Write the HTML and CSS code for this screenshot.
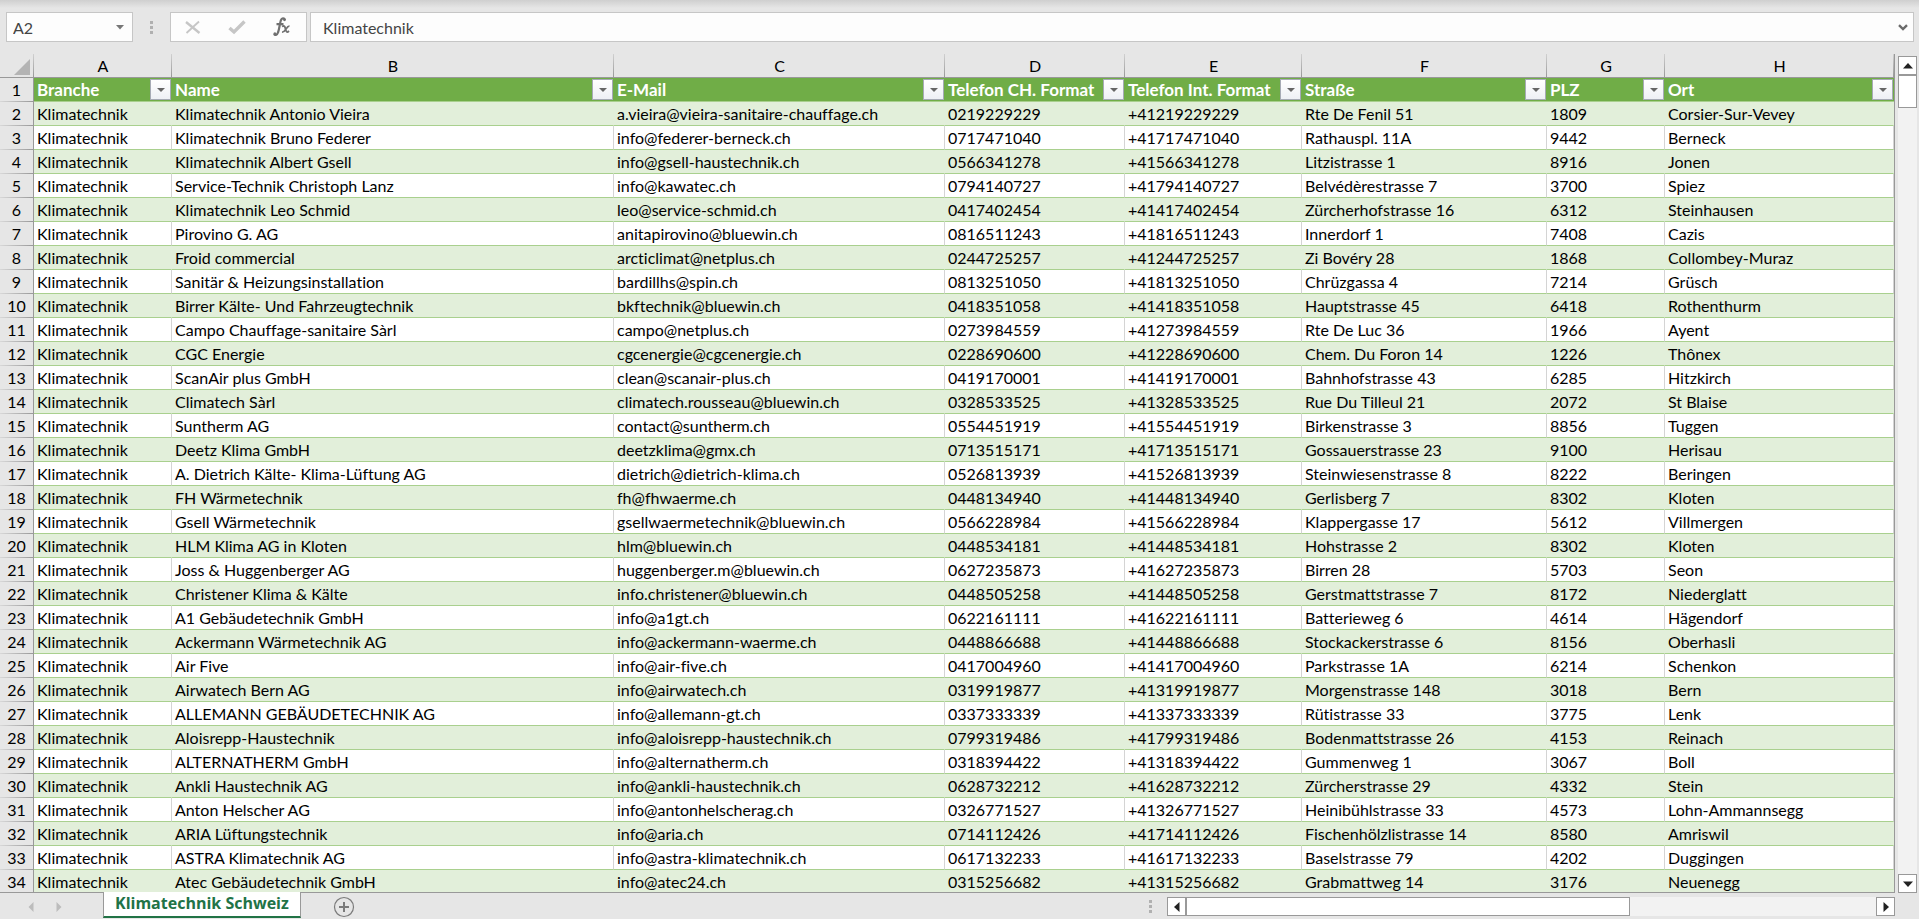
FILE: index.html
```html
<!DOCTYPE html>
<html lang="de">
<head>
<meta charset="utf-8">
<title>Klimatechnik Schweiz</title>
<link rel="stylesheet" href="styles.css">
</head>
<body>
<header class="formula-bar">
  <div class="name-box">
    <input class="name-input" type="text" value="A2" aria-label="Namenfeld">
    <button class="name-toggle" type="button" aria-label="Namen anzeigen"><svg width="8" height="5" viewBox="0 0 8 5"><path d="M0 0h8L4 4.5z" fill="#777"/></svg></button>
  </div>
  <span class="grip"><i></i><i></i><i></i></span>
  <div class="edit-actions">
    <button type="button" aria-label="Abbrechen"><svg width="16" height="16" viewBox="0 0 16 16"><path d="M1 3L14.500 14" fill="none" stroke="#c6c6c6" stroke-width="2.400"/><path d="M14 2.500L1.500 14" fill="none" stroke="#c6c6c6" stroke-width="1.800"/></svg></button>
    <button type="button" aria-label="Eingeben"><svg width="18" height="16" viewBox="0 0 18 16"><path d="M1.500 9L6 13L16.500 2.500" fill="none" stroke="#c6c6c6" stroke-width="3.400"/></svg></button>
    <button type="button" aria-label="Funktion einfügen"><svg width="18" height="20" viewBox="0 0 18 20"><path d="M12 3C11.300 .8 8.800 .8 7.800 3.500C6.800 6.500 6.300 12 5 15.500C4 18.500 1.800 18.500 1.200 17M3.500 7.200H10.500" fill="none" stroke="#707070" stroke-width="2.200"/><circle cx="11.500" cy="2.800" r="1.400" fill="#707070"/><circle cx="1.900" cy="16.800" r="1.500" fill="#707070"/><path d="M9 9.500C11.500 8 12 10 12.500 12C13 15 14 16 16 14M16.500 9.200C13.500 8.800 12.500 15.500 9 15.200" fill="none" stroke="#707070" stroke-width="1.800"/></svg></button>
  </div>
  <div class="formula-box">
    <input class="formula-input" type="text" value="Klimatechnik" aria-label="Bearbeitungsleiste">
    <button class="formula-toggle" type="button" aria-label="Erweitern"><svg width="10" height="7" viewBox="0 0 10 7"><path d="M1 1.200L5 5L9 1.200" fill="none" stroke="#6b6b6b" stroke-width="2.400"/></svg></button>
  </div>
</header>
<main class="workspace">
  <div class="grid">
    <table class="sheet">
      <colgroup><col class="w-num"><col class="w-a"><col class="w-b"><col class="w-c"><col class="w-d"><col class="w-e"><col class="w-f"><col class="w-g"><col class="w-h"></colgroup>
      <thead>
        <tr class="letters"><th class="corner"><svg width="16" height="16" viewBox="0 0 16 16"><path d="M16 0V16H0z" fill="#b4b4b4"/></svg></th><th>A</th><th>B</th><th>C</th><th>D</th><th>E</th><th>F</th><th>G</th><th>H</th></tr>
        <tr class="fields"><th class="num">1</th>
          <th><div class="field">Branche<button type="button" class="filter" aria-label="Branche filtern"></button></div></th>
          <th><div class="field">Name<button type="button" class="filter" aria-label="Name filtern"></button></div></th>
          <th><div class="field">E-Mail<button type="button" class="filter" aria-label="E-Mail filtern"></button></div></th>
          <th><div class="field">Telefon CH. Format<button type="button" class="filter" aria-label="Telefon CH. filtern"></button></div></th>
          <th><div class="field">Telefon Int. Format<button type="button" class="filter" aria-label="Telefon Int. filtern"></button></div></th>
          <th><div class="field">Straße<button type="button" class="filter" aria-label="Straße filtern"></button></div></th>
          <th><div class="field">PLZ<button type="button" class="filter" aria-label="PLZ filtern"></button></div></th>
          <th><div class="field">Ort<button type="button" class="filter" aria-label="Ort filtern"></button></div></th>
        </tr>
      </thead>
      <tbody>
        <tr><th class="num">2</th><td>Klimatechnik</td><td>Klimatechnik Antonio Vieira</td><td>a.vieira@vieira-sanitaire-chauffage.ch</td><td>0219229229</td><td>+41219229229</td><td>Rte De Fenil 51</td><td>1809</td><td>Corsier-Sur-Vevey</td></tr>
        <tr><th class="num">3</th><td>Klimatechnik</td><td>Klimatechnik Bruno Federer</td><td>info@federer-berneck.ch</td><td>0717471040</td><td>+41717471040</td><td>Rathauspl. 11A</td><td>9442</td><td>Berneck</td></tr>
        <tr><th class="num">4</th><td>Klimatechnik</td><td>Klimatechnik Albert Gsell</td><td>info@gsell-haustechnik.ch</td><td>0566341278</td><td>+41566341278</td><td>Litzistrasse 1</td><td>8916</td><td>Jonen</td></tr>
        <tr><th class="num">5</th><td>Klimatechnik</td><td>Service-Technik Christoph Lanz</td><td>info@kawatec.ch</td><td>0794140727</td><td>+41794140727</td><td>Belvédèrestrasse 7</td><td>3700</td><td>Spiez</td></tr>
        <tr><th class="num">6</th><td>Klimatechnik</td><td>Klimatechnik Leo Schmid</td><td>leo@service-schmid.ch</td><td>0417402454</td><td>+41417402454</td><td>Zürcherhofstrasse 16</td><td>6312</td><td>Steinhausen</td></tr>
        <tr><th class="num">7</th><td>Klimatechnik</td><td>Pirovino G. AG</td><td>anitapirovino@bluewin.ch</td><td>0816511243</td><td>+41816511243</td><td>Innerdorf 1</td><td>7408</td><td>Cazis</td></tr>
        <tr><th class="num">8</th><td>Klimatechnik</td><td>Froid commercial</td><td>arcticlimat@netplus.ch</td><td>0244725257</td><td>+41244725257</td><td>Zi Bovéry 28</td><td>1868</td><td>Collombey-Muraz</td></tr>
        <tr><th class="num">9</th><td>Klimatechnik</td><td>Sanitär &amp; Heizungsinstallation</td><td>bardillhs@spin.ch</td><td>0813251050</td><td>+41813251050</td><td>Chrüzgassa 4</td><td>7214</td><td>Grüsch</td></tr>
        <tr><th class="num">10</th><td>Klimatechnik</td><td>Birrer Kälte- Und Fahrzeugtechnik</td><td>bkftechnik@bluewin.ch</td><td>0418351058</td><td>+41418351058</td><td>Hauptstrasse 45</td><td>6418</td><td>Rothenthurm</td></tr>
        <tr><th class="num">11</th><td>Klimatechnik</td><td>Campo Chauffage-sanitaire Sàrl</td><td>campo@netplus.ch</td><td>0273984559</td><td>+41273984559</td><td>Rte De Luc 36</td><td>1966</td><td>Ayent</td></tr>
        <tr><th class="num">12</th><td>Klimatechnik</td><td>CGC Energie</td><td>cgcenergie@cgcenergie.ch</td><td>0228690600</td><td>+41228690600</td><td>Chem. Du Foron 14</td><td>1226</td><td>Thônex</td></tr>
        <tr><th class="num">13</th><td>Klimatechnik</td><td>ScanAir plus GmbH</td><td>clean@scanair-plus.ch</td><td>0419170001</td><td>+41419170001</td><td>Bahnhofstrasse 43</td><td>6285</td><td>Hitzkirch</td></tr>
        <tr><th class="num">14</th><td>Klimatechnik</td><td>Climatech Sàrl</td><td>climatech.rousseau@bluewin.ch</td><td>0328533525</td><td>+41328533525</td><td>Rue Du Tilleul 21</td><td>2072</td><td>St Blaise</td></tr>
        <tr><th class="num">15</th><td>Klimatechnik</td><td>Suntherm AG</td><td>contact@suntherm.ch</td><td>0554451919</td><td>+41554451919</td><td>Birkenstrasse 3</td><td>8856</td><td>Tuggen</td></tr>
        <tr><th class="num">16</th><td>Klimatechnik</td><td>Deetz Klima GmbH</td><td>deetzklima@gmx.ch</td><td>0713515171</td><td>+41713515171</td><td>Gossauerstrasse 23</td><td>9100</td><td>Herisau</td></tr>
        <tr><th class="num">17</th><td>Klimatechnik</td><td>A. Dietrich Kälte- Klima-Lüftung AG</td><td>dietrich@dietrich-klima.ch</td><td>0526813939</td><td>+41526813939</td><td>Steinwiesenstrasse 8</td><td>8222</td><td>Beringen</td></tr>
        <tr><th class="num">18</th><td>Klimatechnik</td><td>FH Wärmetechnik</td><td>fh@fhwaerme.ch</td><td>0448134940</td><td>+41448134940</td><td>Gerlisberg 7</td><td>8302</td><td>Kloten</td></tr>
        <tr><th class="num">19</th><td>Klimatechnik</td><td>Gsell Wärmetechnik</td><td>gsellwaermetechnik@bluewin.ch</td><td>0566228984</td><td>+41566228984</td><td>Klappergasse 17</td><td>5612</td><td>Villmergen</td></tr>
        <tr><th class="num">20</th><td>Klimatechnik</td><td>HLM Klima AG in Kloten</td><td>hlm@bluewin.ch</td><td>0448534181</td><td>+41448534181</td><td>Hohstrasse 2</td><td>8302</td><td>Kloten</td></tr>
        <tr><th class="num">21</th><td>Klimatechnik</td><td>Joss &amp; Huggenberger AG</td><td>huggenberger.m@bluewin.ch</td><td>0627235873</td><td>+41627235873</td><td>Birren 28</td><td>5703</td><td>Seon</td></tr>
        <tr><th class="num">22</th><td>Klimatechnik</td><td>Christener Klima &amp; Kälte</td><td>info.christener@bluewin.ch</td><td>0448505258</td><td>+41448505258</td><td>Gerstmattstrasse 7</td><td>8172</td><td>Niederglatt</td></tr>
        <tr><th class="num">23</th><td>Klimatechnik</td><td>A1 Gebäudetechnik GmbH</td><td>info@a1gt.ch</td><td>0622161111</td><td>+41622161111</td><td>Batterieweg 6</td><td>4614</td><td>Hägendorf</td></tr>
        <tr><th class="num">24</th><td>Klimatechnik</td><td>Ackermann Wärmetechnik AG</td><td>info@ackermann-waerme.ch</td><td>0448866688</td><td>+41448866688</td><td>Stockackerstrasse 6</td><td>8156</td><td>Oberhasli</td></tr>
        <tr><th class="num">25</th><td>Klimatechnik</td><td>Air Five</td><td>info@air-five.ch</td><td>0417004960</td><td>+41417004960</td><td>Parkstrasse 1A</td><td>6214</td><td>Schenkon</td></tr>
        <tr><th class="num">26</th><td>Klimatechnik</td><td>Airwatech Bern AG</td><td>info@airwatech.ch</td><td>0319919877</td><td>+41319919877</td><td>Morgenstrasse 148</td><td>3018</td><td>Bern</td></tr>
        <tr><th class="num">27</th><td>Klimatechnik</td><td>ALLEMANN GEBÄUDETECHNIK AG</td><td>info@allemann-gt.ch</td><td>0337333339</td><td>+41337333339</td><td>Rütistrasse 33</td><td>3775</td><td>Lenk</td></tr>
        <tr><th class="num">28</th><td>Klimatechnik</td><td>Aloisrepp-Haustechnik</td><td>info@aloisrepp-haustechnik.ch</td><td>0799319486</td><td>+41799319486</td><td>Bodenmattstrasse 26</td><td>4153</td><td>Reinach</td></tr>
        <tr><th class="num">29</th><td>Klimatechnik</td><td>ALTERNATHERM GmbH</td><td>info@alternatherm.ch</td><td>0318394422</td><td>+41318394422</td><td>Gummenweg 1</td><td>3067</td><td>Boll</td></tr>
        <tr><th class="num">30</th><td>Klimatechnik</td><td>Ankli Haustechnik AG</td><td>info@ankli-haustechnik.ch</td><td>0628732212</td><td>+41628732212</td><td>Zürcherstrasse 29</td><td>4332</td><td>Stein</td></tr>
        <tr><th class="num">31</th><td>Klimatechnik</td><td>Anton Helscher AG</td><td>info@antonhelscherag.ch</td><td>0326771527</td><td>+41326771527</td><td>Heinibühlstrasse 33</td><td>4573</td><td>Lohn-Ammannsegg</td></tr>
        <tr><th class="num">32</th><td>Klimatechnik</td><td>ARIA Lüftungstechnik</td><td>info@aria.ch</td><td>0714112426</td><td>+41714112426</td><td>Fischenhölzlistrasse 14</td><td>8580</td><td>Amriswil</td></tr>
        <tr><th class="num">33</th><td>Klimatechnik</td><td>ASTRA Klimatechnik AG</td><td>info@astra-klimatechnik.ch</td><td>0617132233</td><td>+41617132233</td><td>Baselstrasse 79</td><td>4202</td><td>Duggingen</td></tr>
        <tr><th class="num">34</th><td>Klimatechnik</td><td>Atec Gebäudetechnik GmbH</td><td>info@atec24.ch</td><td>0315256682</td><td>+41315256682</td><td>Grabmattweg 14</td><td>3176</td><td>Neuenegg</td></tr>
      </tbody>
    </table>
  </div>
  <div class="scroll-v">
    <button type="button" class="scroll-btn" aria-label="Nach oben"><svg width="10" height="6" viewBox="0 0 10 6"><path d="M5 0L10 5.500H0z" fill="#222"/></svg></button>
    <div class="thumb-v"></div>
    <button type="button" class="scroll-btn scroll-end" aria-label="Nach unten"><svg width="10" height="6" viewBox="0 0 10 6"><path d="M0 .5H10L5 6z" fill="#222"/></svg></button>
  </div>
</main>
<footer class="sheet-bar">
  <nav class="sheet-nav">
    <button type="button" aria-label="Vorheriges Blatt"><svg width="6" height="10" viewBox="0 0 6 10"><path d="M5.500 0V10L.5 5z" fill="#bcbcbc"/></svg></button>
    <button type="button" aria-label="Nächstes Blatt"><svg width="6" height="10" viewBox="0 0 6 10"><path d="M.5 0V10L5.500 5z" fill="#bcbcbc"/></svg></button>
  </nav>
  <button type="button" class="tab">Klimatechnik Schweiz</button>
  <button type="button" class="add-sheet" aria-label="Neues Blatt"><svg width="22" height="22" viewBox="0 0 22 22"><circle cx="11" cy="11" r="9.500" fill="none" stroke="#7b7b7b" stroke-width="1.200"/><path d="M11 6V16M6 11H16" stroke="#7b7b7b" stroke-width="2"/></svg></button>
  <span class="grip grip-end"><i></i><i></i><i></i></span>
  <div class="scroll-h">
    <button type="button" class="scroll-btn" aria-label="Nach links"><svg width="6" height="10" viewBox="0 0 6 10"><path d="M5.500 0V10L0 5z" fill="#222"/></svg></button>
    <div class="thumb-h"></div>
    <button type="button" class="scroll-btn scroll-end" aria-label="Nach rechts"><svg width="6" height="10" viewBox="0 0 6 10"><path d="M.5 0V10L6 5z" fill="#222"/></svg></button>
  </div>
</footer>
</body>
</html>
```
FILE: styles.css
```css
* { box-sizing: border-box; }

body {
  margin: 0;
  height: 100vh;
  display: flex;
  flex-direction: column;
  overflow: hidden;
  background: #e6e6e6;
  color: #000;
  font: 16px/23px Lato, "Liberation Sans", sans-serif;
  font-variant-ligatures: none;
}

button, input {
  border: 0;
  padding: 0;
  margin: 0;
  background: none;
  font: inherit;
  color: inherit;
}

button {
  display: flex;
  align-items: center;
  justify-content: center;
}

svg { display: block; flex: none; }

/* Formula bar */
.formula-bar {
  flex: none;
  display: flex;
  align-items: center;
  height: 54px;
  padding: 0 5px 0 6px;
  background: linear-gradient(#cfcfcf, #e6e6e6 8px);
  color: #444;
}

.name-box, .edit-actions, .formula-box {
  display: flex;
  height: 30px;
  border: 1px solid #c6c6c6;
  background: #fdfdfd;
}

.name-box { width: 127px; }
.name-input { flex: 1; min-width: 0; padding-left: 6px; }
.name-toggle { width: 24px; }

.grip {
  display: flex;
  flex-direction: column;
  gap: 2px;
  width: 37px;
  align-items: center;
}
.grip i { width: 3px; height: 3px; background: #b0b0b0; }

.edit-actions {
  width: 137px;
  margin-right: 3px;
  padding-right: 2px;
  justify-content: space-around;
}
.edit-actions button { width: 44px; }

.formula-box { flex: 1; }
.formula-input { flex: 1; min-width: 0; padding-left: 12px; }
.formula-toggle { width: 20px; }

/* Grid */
.workspace {
  flex: 1;
  min-height: 0;
  display: flex;
  gap: 3px;
  padding-right: 2px;
}

.grid {
  flex: 1;
  min-width: 0;
  overflow: hidden;
  border-right: 1px solid #999;
  border-bottom: 1px solid #999;
}

.sheet {
  width: 100%;
  table-layout: fixed;
  border-collapse: separate;
  border-spacing: 0;
  background: #fff;
}

.w-num { width: 34px; }
.w-a { width: 138px; }
.w-b { width: 442px; }
.w-c { width: 331px; }
.w-d { width: 180px; }
.w-e { width: 177px; }
.w-f { width: 245px; }
.w-g { width: 118px; }

.sheet th, .sheet td {
  height: 24px;
  padding: 0 3px;
  white-space: nowrap;
  overflow: hidden;
  text-align: left;
}

.sheet .letters th {
  padding: 0;
  border-bottom: 1px solid #999;
  background: linear-gradient(#d0d0d0, #999) right / 1px 100% no-repeat #e6e6e6;
  font-weight: 400;
  text-align: center;
}
.corner svg { margin: 2px 0 0 14px; }

.sheet .num {
  padding: 0 0 1px;
  border-right: 1px solid #999;
  background: linear-gradient(90deg, #d8d8d8, #999) bottom / 100% 1px no-repeat #e6e6e6;
  font-weight: 400;
  text-align: center;
}

.sheet .fields th:not(.num) {
  padding-right: 1px;
  border-bottom: 1px solid #a9d08e;
  background: #70ad47;
  color: #fff;
  font-size: 17px;
  font-weight: 700;
}

.field {
  display: flex;
  align-items: center;
  justify-content: space-between;
}

.filter {
  flex: none;
  width: 21px;
  height: 21px;
  border: 1px solid #a6aab5;
  background: linear-gradient(#fff, #eef0f5);
}
.filter::before {
  content: "";
  border: 4px solid transparent;
  border-top-color: #666;
  border-bottom: 0;
}

.sheet td {
  border-right: 1px solid #d4d4d4;
  border-bottom: 1px solid #a9d08e;
}
.sheet tbody tr:nth-child(odd) td {
  border-right-color: #e2efda;
  background: #e2efda;
}

/* Scroll bars */
.scroll-v {
  display: flex;
  flex-direction: column;
  width: 19px;
  margin-top: 2px;
  background: #f2f2f2;
}
.scroll-btn {
  flex: none;
  width: 19px;
  height: 19px;
  border: 1px solid #999;
  background: #fff;
}
.thumb-v { height: 33px; border: 1px solid #999; background: #fff; }
.scroll-v .scroll-end { margin-top: auto; }

/* Sheet tabs */
.sheet-bar {
  flex: none;
  display: flex;
  height: 26px;
  padding-right: 24px;
}

.sheet-nav {
  display: flex;
  gap: 22px;
  width: 103px;
  padding: 2px 0 0 28px;
}

.tab {
  position: relative;
  height: 26px;
  margin-top: -1px;
  padding: 0 11px 2px;
  border: 1px solid #999;
  border-top: 0;
  border-bottom: 2px solid #217346;
  background: #fff;
  color: #217346;
  font: 700 16px/22px "Open Sans", "Liberation Sans", sans-serif;
}

.add-sheet { width: 22px; margin: 2px 0 0 32px; }

.grip-end {
  width: 34px;
  margin-left: auto;
  justify-content: center;
}

.scroll-h {
  display: flex;
  width: 38.4%;
  height: 19px;
  margin-top: 4px;
  background: #f2f2f2;
}
.thumb-h { width: 61%; border: 1px solid #999; background: #fff; }
.scroll-h .scroll-end { margin-left: auto; }
```
